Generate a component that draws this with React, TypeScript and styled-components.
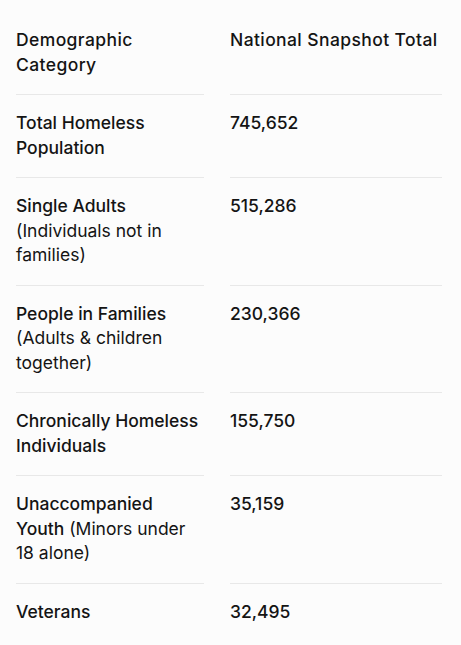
import styled, { createGlobalStyle } from 'styled-components';

const rows = [
	{ bold: 'Total Homeless Population', rest: '', value: '745,652' },
	{ bold: 'Single Adults', rest: ' (Individuals not in families)', value: '515,286' },
	{ bold: 'People in Families', rest: ' (Adults & children together)', value: '230,366' },
	{ bold: 'Chronically Homeless Individuals', rest: '', value: '155,750' },
	{ bold: 'Unaccompanied Youth', rest: ' (Minors under 18 alone)', value: '35,159' },
	{ bold: 'Veterans', rest: '', value: '32,495' },
];

export default function App() {
	return (
		<>
			<GlobalStyle />
			<Table>
				<HeadCell>Demographic Category</HeadCell>
				<HeadCell>National Snapshot Total</HeadCell>
				{rows.map((row, i) => {
					const last = i === rows.length - 1;
					return (
						<Row key={row.bold}>
							<Cell last={last}>
								<Strong>{row.bold}</Strong>
								{row.rest}
							</Cell>
							<Cell last={last}>
								<Strong>{row.value}</Strong>
							</Cell>
						</Row>
					);
				})}
			</Table>
		</>
	);
}

const GlobalStyle = createGlobalStyle`
	body {
		margin: 0;
		background: #fcfcfc;
		color: #141414;
		font-family: Inter, 'Liberation Sans', sans-serif;
	}
`;

const Table = styled.div`
	display: grid;
	grid-template-columns: 188px 212px;
	column-gap: 26px;
	padding: 12px 0 0 16px;
	font-size: 17.5px;
	line-height: 24.5px;
`;

const Row = styled.div`
	display: contents;
`;

const Cell = styled.div<{ last?: boolean }>`
	padding: 16px 0 17px;
	border-bottom: 1px solid ${(p) => (p.last ? 'transparent' : '#e8e8e8')};
`;

const HeadCell = styled(Cell)`
	font-weight: 450;
	letter-spacing: 0.4px;
`;

const Strong = styled.span`
	font-weight: 500;
`;
